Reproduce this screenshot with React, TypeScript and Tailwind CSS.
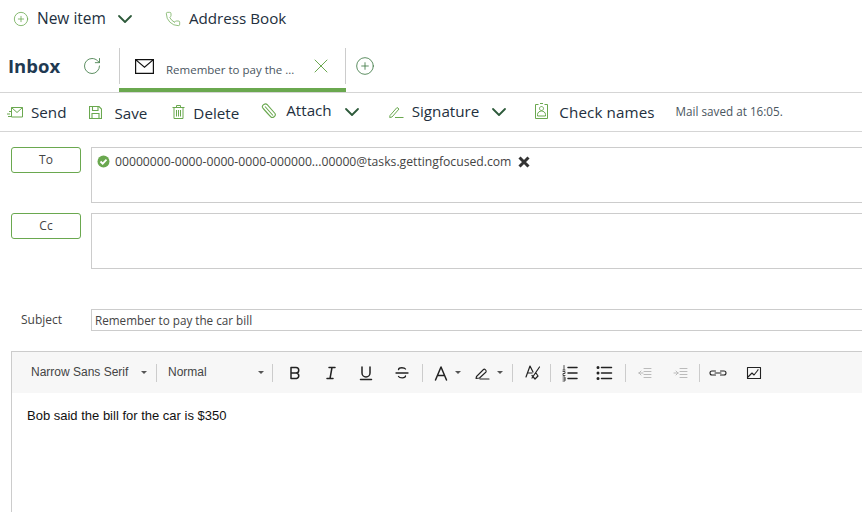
import { ChevronDown, CirclePlus, Phone, RotateCw, X } from "lucide-react";
import type { ReactNode } from "react";

const green = "#6aa84f";

function Caret() {
  return <span className="ml-[5px] h-0 w-0 border-x-[3px] border-t-[3px] border-x-transparent border-t-[#555]" />;
}

function Sep({ className = "" }: { className?: string }) {
  return <span className={`h-[18px] w-px shrink-0 bg-[#ccc] ${className}`} />;
}

function Tool({ w, children }: { w: string; children: ReactNode }) {
  return <span className={`flex shrink-0 items-center justify-center ${w}`}>{children}</span>;
}

function Ico({ children }: { children: ReactNode }) {
  return (
    <svg width="18" height="18" viewBox="0 0 18 18" fill="none" stroke="#222" strokeWidth="1.5" strokeLinecap="round" strokeLinejoin="round">
      {children}
    </svg>
  );
}

function ActionBar() {
  return (
    <div className="flex h-[39px] items-center border-b border-[#d5d5d5] text-[15.200px] text-[#232f3e]">
      <svg className="ml-[7px]" width="16" height="12" viewBox="0 0 16 12" fill="none" stroke={green} strokeWidth="1">
        <path d="M4.500 1.500h11v9.500h-11zM4.500 1.500l5.500 5 5.500-5M0 8h3M1 10.500h3M2 5.500h2" />
      </svg>
      <span className="ml-[8px] mt-[1px]">Send</span>
      <svg className="ml-[23px]" width="13" height="13" viewBox="0 0 13 13" fill="none" stroke={green} strokeWidth="1.100">
        <path d="M.5.500h9.500l2.500 2.500v9.500H.5zM3.500.5v4h5.500v-4M3 12.500v-5h7v5" />
      </svg>
      <span className="ml-[12px] mt-[2px]">Save</span>
      <svg className="ml-[25px]" width="13" height="14" viewBox="0 0 13 14" fill="none" stroke={green} strokeWidth="1">
        <path d="M.5 2.500h12M4.500 2.500v-2h4v2M2 2.500v11h9v-11M4.500 5v6.500M6.500 5v6.500M8.500 5v6.500" />
      </svg>
      <span className="ml-[8px] mt-[2px]">Delete</span>
      <svg className="mb-[2px] ml-[22px]" width="17" height="16" viewBox="0 0 17 16" fill="none" stroke={green} strokeWidth="1.100">
        <path d="M1.500 4.500l8.500 9.500c1.500 1.500 5.500-1 4-3.500L6 1.500C4.500 0 .5 2 1.500 4.500M4 3.500l8 9M1.500 4.500c1 2 7 8 8 9" />
      </svg>
      <span className="mb-[3px] ml-[8px]">Attach</span>
      <ChevronDown className="ml-[8px]" size={24} color="#2d5a3a" strokeWidth={1.800} />
      <svg className="ml-[25px]" width="15" height="14" viewBox="0 0 15 14" fill="none" stroke={green} strokeWidth="1">
        <path d="M1 10.500l7-8 2 1.500-7 8-2.300.5zM6 12.500h8.500" />
      </svg>
      <span className="mb-[2px] ml-[8px]">Signature</span>
      <ChevronDown className="ml-[8px]" size={24} color="#2d5a3a" strokeWidth={1.800} />
      <svg className="mb-[3px] ml-[24px]" width="13" height="16" viewBox="0 0 13 16" fill="none" stroke={green} strokeWidth="1">
        <path d="M.5 1.500h3M9.500 1.500h3v14H.5v-14M5 .5h3M6.500 3.500a2 2 0 1 1-.01 0M2.500 13v-1.500c0-2 2-3.500 4-3.500s4 1.500 4 3.500V13z" />
      </svg>
      <span className="ml-[11px] mt-[1px] tracking-[0.1px]">Check names</span>
      <span className="mb-[1px] ml-[21px] text-[11.700px] text-[#4a5560]">Mail saved at 16:05.</span>
    </div>
  );
}

export default function App() {
  return (
    <div className="h-[512px] w-[862px] overflow-hidden bg-white font-['Open_Sans',sans-serif] text-[#232f3e]">
      <div className="flex h-[37px] items-center pl-[13px] text-[15.200px]">
        <CirclePlus size={16} color={green} strokeWidth={1.200} />
        <span className="ml-[8px] text-[15.500px]">New item</span>
        <ChevronDown className="ml-[7px]" size={24} color="#2d5a3a" strokeWidth={1.800} />
        <Phone className="ml-[28px]" size={16} color={green} strokeWidth={1.100} />
        <span className="ml-[8px]">Address Book</span>
      </div>

      <div className="mt-[11px] flex h-[45px] items-start border-b border-[#d5d5d5] pl-[8px]">
        <span className="flex h-[36px] w-[52px] items-center text-[18.500px] font-bold text-[#1f3a52]">Inbox</span>
        <span className="ml-[22px] flex h-[36px] items-center">
          <RotateCw size={20} color="#3f7a45" strokeWidth={1} />
        </span>
        <div className="ml-[17px] flex h-[44px] w-[227px] flex-col">
          <div className="flex h-[36px] items-center border-l border-r border-[#ccc] pl-[15px] pr-[12px]">
            <svg width="19" height="15" viewBox="0 0 19 15" fill="none" stroke="#111" strokeWidth="1.200">
              <path d="M.6.6h17.800v13.800H.6zM.6.6l8.900 7.500 8.900-7.500" />
            </svg>
            <span className="ml-[12px] mt-[7px] w-[128px] whitespace-nowrap text-[11.500px] text-[#4a5560]">Remember to pay the ...</span>
            <X className="ml-auto" size={24} color={green} strokeWidth={1} />
          </div>
          <div className="mt-auto h-[4px] bg-[#6aa84f]" />
        </div>
        <div className="flex h-[36px] items-center pl-[9px]">
          <CirclePlus size={20} color="#3f7a45" strokeWidth={1} />
        </div>
      </div>

      <ActionBar />

      <div className="mt-[15px] flex gap-[10px] pl-[11px]">
        <button className="h-[26px] w-[70px] rounded-[3px] border border-[#6aa84f] pb-[1px] text-[12px] text-[#444]">To</button>
        <div className="flex h-[56px] flex-1 items-start border-y border-l border-[#ccc] pl-[5px] pt-[5px] text-[12.200px] text-[#444]">
          <svg className="mt-[2px]" width="13" height="13" viewBox="0 0 13 13">
            <circle cx="6.500" cy="6.500" r="6" fill={green} />
            <path d="M3.500 6.500l2.200 2.200 3.800-4" fill="none" stroke="#fff" strokeWidth="1.800" />
          </svg>
          <span className="ml-[5px] whitespace-nowrap">00000000-0000-0000-0000-000000...00000@tasks.gettingfocused.com</span>
          <svg className="ml-[7px] mt-[3px]" width="12" height="12" viewBox="0 0 12 12" fill="none" stroke="#333" strokeWidth="3">
            <path d="M1.500 1.500l9 9M10.500 1.500l-9 9" />
          </svg>
        </div>
      </div>

      <div className="mt-[10px] flex gap-[10px] pl-[11px]">
        <button className="h-[26px] w-[70px] rounded-[3px] border border-[#6aa84f] pb-[1px] text-[12px] text-[#444]">Cc</button>
        <div className="h-[56px] flex-1 border-y border-l border-[#ccc]" />
      </div>

      <div className="mt-[40px] flex items-center pl-[21px]">
        <span className="w-[70px] text-[12px] text-[#444]">Subject</span>
        <div className="flex h-[22px] flex-1 items-center border-y border-l border-[#ccc] pl-[3px] pt-[2px] text-[11.700px] text-[#444]">Remember to pay the car bill</div>
      </div>

      <div className="ml-[11px] mt-[20px] h-[170px] border-l border-t border-[#ccc] font-['Liberation_Sans',sans-serif]">
        <div className="flex h-[41px] items-center bg-[#f7f7f7] pl-[19px] text-[12px] text-[#444]">
          <span className="mb-[1px] w-[98px] whitespace-nowrap">Narrow Sans Serif</span>
          <span className="ml-[7px] flex"><Caret /></span>
          <Sep className="ml-[9px]" />
          <span className="mb-[1px] ml-[11px] w-[85px]">Normal</span>
          <span className="flex"><Caret /></span>
          <Sep className="ml-[8px]" />
          <Tool w="w-[36px] ml-[4px]"><Ico><path d="M5 3.500h5a2.700 2.700 0 0 1 0 5.500H5zM5 9h5.500a2.800 2.800 0 0 1 0 5.500H5z" /></Ico></Tool>
          <Tool w="w-[35px]"><Ico><path d="M7 3.500h6M5 14.500h6M10 3.500l-2 11" /></Ico></Tool>
          <Tool w="w-[36px]"><Ico><path d="M5 3v6a4 4 0 0 0 8 0V3M3.500 15.500h11" /></Ico></Tool>
          <Tool w="w-[36px]"><Ico><path d="M3 9h12M12.500 5c-1-1.500-6.500-2-7 .5M5.500 12.500c1 1.700 7 2 7-.5" strokeWidth="1.300" /></Ico></Tool>
          <Sep className="ml-[2px]" />
          <Tool w="w-[41px] pl-[5px]">
            <span className="flex items-center"><Ico><path d="M3.500 16L9 3l5.500 13M5.500 11.500h7" /></Ico><Caret /></span>
          </Tool>
          <Tool w="w-[43px] pl-[5px]">
            <span className="flex items-center">
              <Ico><path d="M2.500 12.500l7-7c1-1 3.500 1 2.500 2.500l-6.500 6-3.500.5zM6 15h9" strokeWidth="1.100" /></Ico>
              <Caret />
            </span>
          </Tool>
          <Sep className="ml-[5px]" />
          <Tool w="w-[37px] pl-[3px]"><Ico><path d="M2 13l4-11 3 6M4 9h4M15.500 3L8 14M8 11.500l3 3.500 3-3-2-3" strokeWidth="1.200" /></Ico></Tool>
          <Sep />
          <Tool w="w-[38px]"><Ico><path d="M7 3.500h9M7 9h9M7 14.500h9" /><path d="M3 1.500v4M2 6h2M2 7.500h2v2H2v2h2M2 13h2v4H2M2 15h2" strokeWidth=".8" /></Ico></Tool>
          <Tool w="w-[30px]"><Ico><path d="M6.500 3.500h10M6.500 9h10M6.500 14.500h10" /><path d="M3 3.500h.01M3 9h.01M3 14.500h.01" strokeWidth="3" /></Ico></Tool>
          <Sep className="ml-[6px]" />
          <Tool w="w-[36px] ml-[1px]"><Ico><path d="M8 4.500h7M8 7.500h7M8 10.500h7M8 13.500h7M3 9h4M3 9l2-2M3 9l2 2" stroke="#bbb" strokeWidth="1" /></Ico></Tool>
          <Tool w="w-[36px]"><Ico><path d="M8 4.500h7M8 7.500h7M8 10.500h7M8 13.500h7M2 9h4M6 9L4 7M6 9l-2 2" stroke="#bbb" strokeWidth="1" /></Ico></Tool>
          <Sep />
          <Tool w="w-[36px]"><Ico><path d="M6.500 7H3a2 2 0 0 0 0 4h3.500M11.500 7H15a2 2 0 0 1 0 4h-3.500M6 9h6" strokeWidth="1.100" /></Ico></Tool>
          <Tool w="w-[36px]"><Ico><path d="M2.500 3.500h13v11h-13zM3 13l4-4 2 2 4-5M13 5.500h.01" strokeWidth="1.100" /></Ico></Tool>
        </div>
        <div className="pl-[15px] pt-[13px] text-[13px] text-[#111]">Bob said the bill for the car is $350</div>
      </div>
    </div>
  );
}
